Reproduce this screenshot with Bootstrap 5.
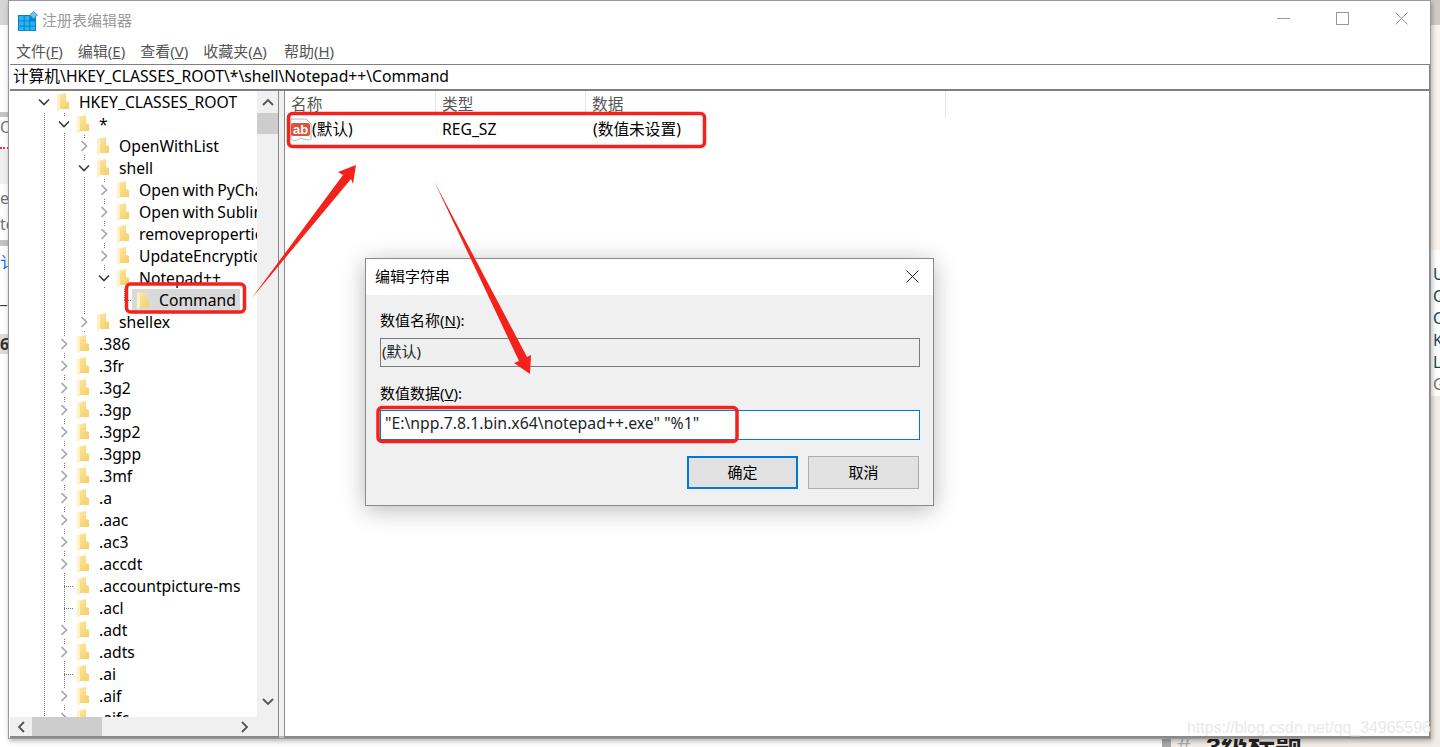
<!DOCTYPE html>
<html lang="zh-CN">
<head>
    <meta charset="UTF-8">
    <title>注册表编辑器</title>
    <link href="https://cdn.jsdelivr.net/npm/bootstrap@5.3.0/dist/css/bootstrap.min.css" rel="stylesheet">
    <style>
        html, body { height: 747px; overflow: hidden; }
        body {
            position: relative;
            background: #fff;
            font-family: "Noto Sans", "Noto Sans CJK SC", sans-serif;
            font-size: 15.7px;
            color: #000;
        }

        /* scraps of the page behind the window */
        .behind-left, .behind-right { position: absolute; top: 0; width: 12px; height: 747px; overflow: hidden; display: flex; flex-direction: column; font-size: 16px; line-height: 20px; }
        .behind-left { left: 0; }
        .behind-right { right: 0; width: 9px; }
        .scrap { flex: none; white-space: nowrap; }
        .behind-bottom { position: absolute; left: 1162px; top: 738px; display: flex; font-family: "Liberation Sans", "Noto Sans CJK SC", sans-serif; }
        .behind-fill { position: absolute; left: 1162px; right: 0; top: 738px; height: 9px; background: #f4ece6; }
        .heading-bar { width: 9px; height: 9px; background: #aaa; }
        .heading-hash { margin-left: 6px; margin-top: -4px; width: 29px; font-size: 24px; line-height: 26px; color: #aaa; }
        .heading-text { margin-top: -4px; font-size: 27px; line-height: 28px; font-weight: 700; color: #222; }

        /* main window */
        .reg-window {
            position: absolute; left: 8px; top: 0; width: 1423px; height: 739px;
            background: #fff; border: 1px solid #999;
            box-shadow: 1px 2px 5px rgba(0, 0, 0, .3);
            display: flex; flex-direction: column;
        }
        .title-row { height: 39px; flex: none; padding-left: 9px; }
        .title-text { margin-left: 4px; margin-bottom: 1px; font-size: 15px; color: #999; }
        .win-btn { width: 46px; height: 39px; display: flex; align-items: center; justify-content: center; }
        .menu-row { height: 24px; flex: none; padding-left: 7px; font-size: 15px; color: #555; line-height: 22px; }
        .menu-entry { margin-right: 15px; }
        .menu-entry.menu-wide { margin-right: 17px; }
        .address-row {
            height: 27px; flex: none; padding-left: 3px; line-height: 23px; background: #fff;
            border: 1px solid #808080; border-bottom-width: 2px; border-left: 0; margin-left: 1px; white-space: nowrap;
        }
        .panes { flex: 1; min-height: 0; display: flex; padding-left: 1px; }

        /* left tree */
        .tree-pane { width: 269px; flex: none; display: grid; grid-template-columns: 247px 21px; grid-template-rows: 626px 19px; border-right: 1px solid #888; border-bottom: 2px solid #888; }
        .tree-body { overflow: hidden; }
        .tree-row { height: 22px; display: flex; align-items: center; padding-left: 24px; white-space: nowrap; line-height: 22px; }
        .tree-col { width: 20px; height: 22px; flex: none; display: flex; align-items: center; justify-content: center; }
        .guide-on { background: repeating-linear-gradient(#777 0 1px, transparent 1px 2px) 10px 0 / 1px 100% no-repeat; }
        .guide-half { background: repeating-linear-gradient(#777 0 1px, transparent 1px 2px) 10px 0 / 1px 50% no-repeat, repeating-linear-gradient(90deg, #777 0 1px, transparent 1px 2px) 10px 11px / 10px 1px no-repeat; }
        .guide-leaf { background: repeating-linear-gradient(#777 0 1px, transparent 1px 2px) 10px 0 / 1px 100% no-repeat, repeating-linear-gradient(90deg, #777 0 1px, transparent 1px 2px) 10px 11px / 10px 1px no-repeat; }
        .chev-box { width: 14px; height: 16px; background: #fff; display: flex; align-items: center; justify-content: center; }
        .tree-item { display: flex; align-items: center; padding-left: 3px; height: 22px; }
        .tree-item.is-selected { background: #d9d9d9; margin-left: -2px; padding-left: 5px; padding-right: 4px; }
        .tree-label { margin-left: 10px; word-spacing: -1px; }
        .scroll-v { grid-column: 2; grid-row: 1; background: #f0f0f0; display: flex; flex-direction: column; align-items: center; }
        .scroll-h { grid-column: 1 / 3; grid-row: 2; background: #f0f0f0; display: flex; align-items: center; }
        .scroll-thumb-v { width: 100%; height: 21px; background: #cdcdcd; }
        .scroll-thumb-h { width: 70px; height: 19px; background: #cdcdcd; }
        .arrow-v { height: 22px; display: flex; align-items: center; }
        .arrow-h { width: 22px; display: flex; align-items: center; justify-content: center; }

        .splitter { width: 5px; flex: none; background: #f0f0f0; border-bottom: 2px solid #bbb; }

        /* right list */
        .list-pane { flex: 1; border-left: 1px solid #888; border-right: 1px solid #888; border-bottom: 2px solid #888; }
        .list-head { height: 26px; display: flex; color: #555; line-height: 26px; }
        .list-cell { width: 150px; padding-left: 6px; flex: none; }
        .list-head .list-cell { border-right: 1px solid #e5e5e5; }
        .list-head .list-first { width: 151px; }
        .list-head .list-wide { width: 360px; }
        .list-row { height: 24px; margin-top: 1px; display: flex; align-items: center; }
        .list-name { width: 151px; flex: none; display: flex; align-items: center; padding-left: 5px; }
        .list-value { padding-left: 7px; }

        /* edit string dialog */
        .edit-dialog {
            position: absolute; left: 365px; top: 258px; width: 569px; height: 248px;
            background: #f0f0f0; border: 1px solid #8a8a8a;
            box-shadow: 0 4px 22px rgba(0, 0, 0, .28);
            font-size: 15px;
        }
        .dialog-title { height: 36px; background: #fff; padding: 0 14px 2px 9px; }
        .dialog-body { padding: 16px 13px 0 14px; }
        .field-label { height: 20px; line-height: 18px; margin: 0; display: block; }
        .field-box { height: 29px; margin: 7px 0 17px; padding: 0 0 0 1px; line-height: 25px; border: 1px solid #7a7a7a; border-radius: 0; background: #efefef; font-size: 15px; }
        .field-input { height: 30px; margin-top: 6px; padding: 0 0 0 4px; line-height: 25px; border: 1px solid #0078d7; border-radius: 0; background: #fff; font-size: 15.8px; white-space: nowrap; }
        .dialog-actions { margin-top: 16px; gap: 10px; padding-right: 1px; }
        .dlg-btn { width: 111px; height: 33px; padding: 0; border-radius: 0; background: #e1e1e1; border: 1px solid #adadad; font-size: 15px; color: #000; }
        .dlg-btn.is-default { border: 2px solid #0078d7; }

        /* red annotations */
        .marks { position: absolute; left: 0; top: 0; pointer-events: none; }
        .watermark { position: absolute; left: 1187px; top: 717px; font-family: "Liberation Sans", sans-serif; font-size: 15.9px; line-height: 22px; color: #e9e9e9; white-space: nowrap; pointer-events: none; }
    </style>
</head>
<body>
    <svg width="0" height="0" class="d-block" style="position:absolute">
        <defs>
            <linearGradient id="folderFill" x1="0" y1="0" x2="1" y2="1">
                <stop offset="0" stop-color="#fde9a6"/>
                <stop offset="1" stop-color="#f5cd62"/>
            </linearGradient>
            <symbol id="folder" viewBox="0 0 12 18">
                <path d="M0 2 L9 0 V8 L12 9 V16 H3 L1 18 H0 Z" fill="url(#folderFill)"/>
                <path d="M0 2 L3 1.3 V16 L1 18 H0 Z" fill="#fff1c4"/>
            </symbol>
        </defs>
    </svg>

    <!-- page behind the window -->
    <div class="behind-left">
        <div class="scrap" style="height:25px;background:#d6d6d6"></div>
        <div class="scrap" style="height:87px"></div>
        <div class="scrap" style="height:5px;background:#c4c4c4"></div>
        <div class="scrap text-secondary" style="height:20px">O</div>
        <div class="scrap" style="height:12px;border-bottom:2px dotted #e33"></div>
        <div class="scrap" style="height:35px;background:#f0f0f0"></div>
        <div class="scrap text-secondary" style="height:30px;padding-top:4px">el</div>
        <div class="scrap text-secondary" style="height:26px">to</div>
        <div class="scrap" style="height:6px;background:#c4c4c4"></div>
        <div class="scrap text-primary" style="height:38px;padding-top:6px">讠</div>
        <div class="scrap" style="height:50px;color:#333;padding-top:4px">_F</div>
        <div class="scrap" style="height:20px;background:#dcdcdc;color:#333;font-weight:700">6</div>
    </div>
    <div class="behind-right">
        <div class="scrap" style="height:25px;background:#cfcac6"></div>
        <div class="scrap" style="height:225px;background:#f8f3ef"></div>
        <div class="scrap" style="height:14px"></div>
        <div class="scrap" style="height:22px;color:#245;padding-left:2px">U</div>
        <div class="scrap" style="height:22px;color:#245;padding-left:2px">C</div>
        <div class="scrap" style="height:22px;color:#245;padding-left:2px">C</div>
        <div class="scrap" style="height:22px;color:#245;padding-left:2px">K</div>
        <div class="scrap" style="height:22px;color:#245;padding-left:2px">L</div>
        <div class="scrap" style="height:22px;color:#776;padding-left:2px">G</div>
        <div class="scrap flex-grow-1" style="background:#f4ece6"></div>
    </div>
    <div class="behind-fill"></div>
    <div class="behind-bottom">
        <div class="heading-bar"></div>
        <div class="heading-hash">#</div>
        <div class="heading-text">3级标题</div>
    </div>

    <!-- registry editor window -->
    <div class="reg-window">
        <div class="title-row d-flex align-items-center">
            <svg width="20" height="20" viewBox="0 0 20 20">
                <rect x="0" y="4" width="18" height="16" fill="#0a7fd0"/>
                <g fill="#29b6f0">
                    <rect x="1" y="5" width="4.6" height="4.4"/><rect x="6.7" y="5" width="4.6" height="4.4"/>
                    <rect x="1" y="10.4" width="4.6" height="4.2"/><rect x="6.7" y="10.4" width="4.6" height="4.2"/><rect x="12.4" y="10.4" width="4.6" height="4.2"/>
                    <rect x="1" y="15.6" width="4.6" height="3.6"/><rect x="6.7" y="15.6" width="4.6" height="3.6"/><rect x="12.4" y="15.6" width="4.6" height="3.6"/>
                </g>
                <path d="M15.5 0.5 L19.5 4 L15.5 8 L11.8 4 Z" fill="#6cc6ee" stroke="#2a86c8" stroke-width=".8"/>
            </svg>
            <span class="title-text">注册表编辑器</span>
            <div class="ms-auto d-flex" style="margin-right:6px;margin-top:-4px;gap:13px">
                <div class="win-btn"><svg width="13" height="13" viewBox="0 0 13 13"><path d="M0 6.5 H13" stroke="#999" fill="none"/></svg></div>
                <div class="win-btn"><svg width="13" height="13" viewBox="0 0 13 13"><rect x=".5" y=".5" width="12" height="12" stroke="#999" fill="none"/></svg></div>
                <div class="win-btn"><svg width="13" height="13" viewBox="0 0 13 13"><path d="M.5 .5 L12.5 12.5 M12.5 .5 L.5 12.5" stroke="#999" fill="none"/></svg></div>
            </div>
        </div>
        <div class="menu-row d-flex">
            <span class="menu-entry">文件(<u>F</u>)</span>
            <span class="menu-entry">编辑(<u>E</u>)</span>
            <span class="menu-entry">查看(<u>V</u>)</span>
            <span class="menu-entry menu-wide">收藏夹(<u>A</u>)</span>
            <span class="menu-entry">帮助(<u>H</u>)</span>
        </div>
        <div class="address-row">计算机\HKEY_CLASSES_ROOT\*\shell\Notepad++\Command</div>

        <div class="panes">
            <div class="tree-pane">
                <div class="tree-body" id="tree-body"></div>
                <div class="scroll-v">
                    <div class="arrow-v"><svg width="12" height="8" viewBox="0 0 12 8"><path d="M1 7 L6 2 L11 7" stroke="#555" stroke-width="1.8" fill="none"/></svg></div>
                    <div class="scroll-thumb-v"></div>
                    <div class="arrow-v mt-auto mb-1"><svg width="12" height="8" viewBox="0 0 12 8"><path d="M1 1 L6 6 L11 1" stroke="#555" stroke-width="1.8" fill="none"/></svg></div>
                </div>
                <div class="scroll-h">
                    <div class="arrow-h"><svg width="8" height="12" viewBox="0 0 8 12"><path d="M7 1 L2 6 L7 11" stroke="#555" stroke-width="1.8" fill="none"/></svg></div>
                    <div class="scroll-thumb-h"></div>
                    <div class="arrow-h ms-auto" style="margin-right:22px"><svg width="8" height="12" viewBox="0 0 8 12"><path d="M1 1 L6 6 L1 11" stroke="#555" stroke-width="1.8" fill="none"/></svg></div>
                </div>
            </div>
            <div class="splitter"></div>
            <div class="list-pane">
                <div class="list-head">
                    <div class="list-cell list-first">名称</div>
                    <div class="list-cell">类型</div>
                    <div class="list-cell list-wide">数据</div>
                </div>
                <div class="list-row">
                    <div class="list-name">
                        <svg width="22" height="24" viewBox="0 0 22 24">
                            <path d="M1 1 H16 L21 6 V21 C17 24 13 19 9 21 C6 23 3 23 1 21 Z" fill="#fff" stroke="#b5b5b5"/>
                            <rect x="1" y="5" width="19" height="13" rx="2" fill="#d9553c"/>
                            <text x="10.5" y="15.5" text-anchor="middle" font-family="Liberation Sans" font-weight="700" font-size="13" fill="#fff">ab</text>
                        </svg>
                        <span>(默认)</span>
                    </div>
                    <div class="list-cell">REG_SZ</div>
                    <div class="list-cell list-value">(数值未设置)</div>
                </div>
            </div>
        </div>
    </div>

    <!-- edit string dialog -->
    <div class="edit-dialog">
        <div class="dialog-title d-flex align-items-center justify-content-between">
            <span>编辑字符串</span>
            <svg width="13" height="13" viewBox="0 0 13 13"><path d="M.5 .5 L12.5 12.5 M12.5 .5 L.5 12.5" stroke="#222" fill="none"/></svg>
        </div>
        <div class="dialog-body">
            <label class="field-label">数值名称(<u>N</u>):</label>
            <div class="form-control field-box">(默认)</div>
            <label class="field-label">数值数据(<u>V</u>):</label>
            <div class="form-control field-input">"E:\npp.7.8.1.bin.x64\notepad++.exe" "%1"</div>
            <div class="d-flex justify-content-end dialog-actions">
                <button type="button" class="btn dlg-btn is-default">确定</button>
                <button type="button" class="btn dlg-btn">取消</button>
            </div>
        </div>
    </div>

    <!-- red rectangles and arrows drawn on the screenshot -->
    <svg class="marks" width="1440" height="747" viewBox="0 0 1440 747">
        <g fill="none" stroke="#f5211b" stroke-width="3.5">
            <rect x="288.5" y="113.5" width="416" height="33" rx="4"/>
            <rect x="126.5" y="284" width="118" height="28" rx="4"/>
            <rect x="378" y="407.5" width="359" height="34" rx="4"/>
        </g>
        <g fill="#f5211b">
            <polygon points="251,299 343,175 338,172 356,165 353,184 351,179"/>
            <polygon points="434,181 519,361 514,363 530,374 531,355 527,357"/>
        </g>
    </svg>
    <div class="watermark">https://blog.csdn.net/qq_34965596</div>

    <script>
        // [level, state, label, guide columns]  state: o = open, c = closed, l = leaf, s = selected leaf
        const topRows = [
            [0, 'o', 'HKEY_CLASSES_ROOT', []],
            [1, 'o', '*', [0]],
            [2, 'c', 'OpenWithList', [0, 1]],
            [2, 'o', 'shell', [0, 1]],
            [3, 'c', 'Open with PyCharm', [0, 1, 2]],
            [3, 'c', 'Open with Sublime', [0, 1, 2]],
            [3, 'c', 'removeproperties', [0, 1, 2]],
            [3, 'c', 'UpdateEncryption', [0, 1, 2]],
            [3, 'o', 'Notepad++', [0, 1, 2]],
            [4, 's', 'Command', [0, 1, 2]],
            [2, 'c', 'shellex', [0, 1]]
        ];
        const extensions = ['.386', '.3fr', '.3g2', '.3gp', '.3gp2', '.3gpp', '.3mf', '.a', '.aac', '.ac3', '.accdt',
            '.accountpicture-ms', '.acl', '.adt', '.adts', '.ai', '.aif', '.aifc'];
        const leafNames = ['.accountpicture-ms', '.acl', '.ai'];
        const rows = topRows.concat(extensions.map(name => [1, leafNames.includes(name) ? 'l' : 'c', name, [0]]));

        const chevClosed = '<svg width="8" height="12" viewBox="0 0 8 12"><path d="M1.5 1 L6.5 6 L1.5 11" stroke="#a8a8a8" stroke-width="1.7" fill="none"/></svg>';
        const chevOpen = '<svg width="12" height="8" viewBox="0 0 12 8"><path d="M1 1.5 L6 6.5 L11 1.5" stroke="#404040" stroke-width="1.7" fill="none"/></svg>';

        document.getElementById('tree-body').innerHTML = rows.map(([level, state, label, guides]) => {
            let cols = '';
            for (let i = 0; i < level; i++) {
                cols += `<div class="tree-col ${guides.includes(i) ? 'guide-on' : ''}"></div>`;
            }
            if (state === 'l') {
                cols += '<div class="tree-col guide-leaf"></div>';
            } else if (state === 's') {
                cols += '<div class="tree-col guide-half"></div>';
            } else {
                const hasLine = level > 0;
                cols += `<div class="tree-col ${hasLine ? 'guide-on' : ''}"><span class="chev-box">${state === 'o' ? chevOpen : chevClosed}</span></div>`;
            }
            return `<div class="tree-row">${cols}<div class="tree-item ${state === 's' ? 'is-selected' : ''}">
                <svg width="12" height="18"><use href="#folder"/></svg><span class="tree-label">${label}</span></div></div>`;
        }).join('');
    </script>

    <script src="https://cdn.jsdelivr.net/npm/bootstrap@5.3.0/dist/js/bootstrap.bundle.min.js"></script>
</body>
</html>
